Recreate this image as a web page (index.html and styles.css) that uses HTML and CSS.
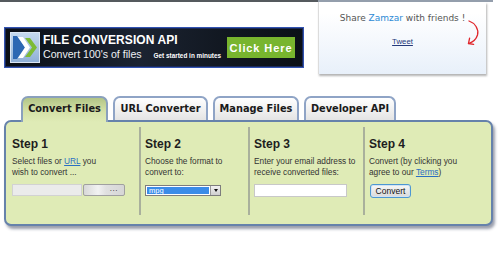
FILE: index.html
```html
<!DOCTYPE html>
<html lang="en">
<head>
<meta charset="utf-8">
<title>Zamzar - Convert Files</title>
<link rel="stylesheet" href="styles.css">
</head>
<body>
<header class="top">
  <div class="top-left">
    <div class="banner">
      <svg class="logo" viewBox="0 0 30 31" width="30" height="31">
        <defs>
          <linearGradient id="lg" x1="0" y1="0" x2="0" y2="1">
            <stop offset="0" stop-color="#c6daef"/>
            <stop offset="1" stop-color="#8eafd6"/>
          </linearGradient>
        </defs>
        <rect x="0.5" y="0.5" width="29" height="30" fill="url(#lg)" stroke="#dce7f4"/>
        <polygon points="3,4 7,4 15,15.5 7,27 3,27" fill="#2d68b3"/>
        <polygon points="8,5 13,5 20,15.5 13,26 8,26 15,15.5" fill="#ffffff"/>
        <polygon points="15,6 20,6 27,15.5 20,25 15,25 22,15.5" fill="#7dbb36"/>
      </svg>
      <div class="banner-text">
        <div class="b-title">FILE CONVERSION API</div>
        <div class="b-sub"><span>Convert 100's of files</span><span class="b-small">Get started in minutes</span></div>
      </div>
      <div class="b-btn">Click Here</div>
    </div>
  </div>
  <div class="top-right">
    <div class="share">
      <p class="share-text">Share <span class="zam">Zamzar</span> with friends !</p>
      <a class="tweet" href="#">Tweet</a>
      <svg class="arrow" width="14" height="30" viewBox="0 0 14 30">
        <path d="M3 3 C9 5 13 11 11.5 17 C10 22 6 24.5 2.5 25.5" fill="none" stroke="#e0262b" stroke-width="1.3" stroke-linecap="round"/>
        <path d="M2.5 25.5 L3.6 20.2 M2.5 25.5 L7.6 26.4" fill="none" stroke="#e0262b" stroke-width="1.3" stroke-linecap="round"/>
      </svg>
    </div>
  </div>
</header>

<nav class="tabs">
  <div class="tab t1 active">Convert Files</div>
  <div class="tab t2">URL Converter</div>
  <div class="tab t3">Manage Files</div>
  <div class="tab t4">Developer API</div>
</nav>

<section class="panel">
  <div class="col first">
    <h3 class="step">Step 1</h3>
    <p class="desc">Select files or <a href="#">URL</a> you<br>wish to convert ...</p>
    <div class="ctrl">
      <div class="file-field"></div>
      <div class="file-btn">...</div>
    </div>
  </div>
  <div class="col">
    <h3 class="step">Step 2</h3>
    <p class="desc">Choose the format to<br>convert to:</p>
    <div class="ctrl sel-wrap">
      <div class="sel">
        <div class="sel-val">mpg</div>
        <div class="sel-btn"><span class="tri"></span></div>
      </div>
    </div>
  </div>
  <div class="col">
    <h3 class="step">Step 3</h3>
    <p class="desc">Enter your email address to<br>receive converted files:</p>
    <div class="ctrl">
      <input class="email" type="text">
    </div>
  </div>
  <div class="col">
    <h3 class="step">Step 4</h3>
    <p class="desc">Convert (by clicking you<br>agree to our <a href="#">Terms</a>)</p>
    <div class="ctrl">
      <button class="convert" type="button">Convert</button>
    </div>
  </div>
</section>
</body>
</html>
```
FILE: styles.css
```css
* { box-sizing: border-box; }
html, body { margin: 0; padding: 0; background: #fff; }
body {
  width: 502px;
  height: 253px;
  overflow: hidden;
  font-family: "Liberation Sans", Arial, sans-serif;
  color: #333;
}

/* ---------- header ---------- */
.top { display: flex; align-items: flex-start; }
.top-left {
  width: 318px;
  border-top: 2px solid #555a5e;
  padding: 25px 0 0 4px;
}
.banner {
  display: flex;
  align-items: center;
  width: 300px;
  height: 41px;
  border: 1px solid #3253b2;
  box-shadow: inset 0 0 0 1px #1b2a58;
  background: linear-gradient(90deg, #0a0f16, #1b2331 45%, #111720 75%, #0b1017);
  padding: 0 8px 0 5px;
}
.logo { flex: none; display: block; }
.banner-text { margin-left: 3px; }
.b-title {
  font-weight: bold;
  font-size: 12px;
  line-height: 13px;
  color: #fff;
  letter-spacing: 0.1px;
}
.b-sub {
  display: flex;
  align-items: baseline;
  margin-top: 1px;
  font-size: 10.6px;
  line-height: 13px;
  color: #eef0f3;
}
.b-small {
  margin-left: 12px;
  font-size: 6.4px;
  font-weight: bold;
  color: #fff;
}
.b-btn {
  margin-left: auto;
  width: 68px;
  height: 21px;
  background: #78b52e;
  color: #fff;
  font-weight: bold;
  font-size: 11px;
  letter-spacing: 0.9px;
  display: flex;
  align-items: center;
  justify-content: center;
}

.top-right {
  width: 175px;
  border-top: 2px solid #949eac;
}
.share {
  position: relative;
  width: 168px;
  height: 72px;
  border-left: 1px solid #dcdcdc;
  background: linear-gradient(#ffffff 15%, #e8f0fa);
  box-shadow: 1px 2px 2px rgba(0, 0, 0, 0.3);
  text-align: center;
  padding-top: 11px;
}
.share-text {
  margin: 0;
  font-family: "DejaVu Sans", Verdana, sans-serif;
  font-size: 9px;
  line-height: 11px;
  color: #555;
}
.zam { color: #2d8ad5; }
.tweet {
  display: block;
  margin-top: 13.4px;
  font-size: 7.8px;
  line-height: 10px;
  color: #24397a;
  text-decoration: underline;
}
.arrow { position: absolute; left: 147px; top: 16px; }

/* ---------- tabs ---------- */
.tabs {
  display: flex;
  align-items: flex-start;
  gap: 5px;
  height: 24px;
  margin-top: 22px;
  padding-left: 21px;
  position: relative;
  z-index: 1;
}
.tab {
  height: 24px;
  border: 2px solid #8fa4c6;
  border-bottom: none;
  border-radius: 7px 7px 0 0;
  background: linear-gradient(#ffffff, #e4e4e4);
  font-family: "DejaVu Sans", Verdana, sans-serif;
  font-weight: bold;
  font-size: 9.8px;
  line-height: 12px;
  padding-top: 5px;
  text-align: center;
  color: #1a1a1a;
  white-space: nowrap;
}
.tab.active {
  height: 26px;
  border-color: #8aa0bd;
  background: linear-gradient(#b2c586, #d4e1a7 55%, #dfebb6);
}
.t1 { width: 87px; }
.t2 { width: 95px; }
.t3 { width: 86px; }
.t4 { width: 92px; }

/* ---------- panel ---------- */
.panel {
  margin-left: 4px;
  width: 489px;
  height: 106px;
  border: 2px solid #6682ab;
  border-radius: 7px;
  background: #dfebb6;
  box-shadow: 2px 3px 3px rgba(30, 40, 70, 0.45);
  display: grid;
  grid-template-columns: 133px 109px 115px 1fr;
  padding: 5px 0 9px 0;
}
.col {
  padding-left: 4px;
  border-left: 2px solid #a9b09c;
}
.col.first {
  padding-left: 6px;
  border-left: none;
}
.step {
  margin: 10px 0 0;
  font-size: 12px;
  line-height: 14px;
  font-weight: bold;
  color: #1e1e1e;
}
.desc {
  margin: 4.8px 0 0;
  font-size: 8.3px;
  line-height: 11px;
  color: #333;
  white-space: nowrap;
}
.desc a { color: #2b6fc2; text-decoration: underline; }
.ctrl { display: flex; margin-top: 6.2px; }

.file-field {
  width: 70px;
  height: 12px;
  background: #ebebeb;
  border: 1px solid #d2d2d2;
}
.file-btn {
  margin-left: 1px;
  width: 42px;
  height: 12px;
  border: 1px solid #a0a0a0;
  border-radius: 2px;
  background: linear-gradient(90deg, #d8d8d8, #f2f2f2 35%, #e0e0e0 55%, #d6d6d6);
  font-size: 8px;
  line-height: 7px;
  text-align: right;
  padding-right: 6px;
  color: #222;
  letter-spacing: 0.5px;
}

.sel-wrap { margin-top: 7.2px; }
.sel {
  display: flex;
  width: 76px;
  height: 11px;
  border: 1px solid #7d7d7d;
  background: #fff;
}
.sel-val {
  flex: 1;
  margin: 1px 1px 1px 1px;
  background: #3b8ce8;
  color: #fff;
  font-size: 7.5px;
  line-height: 7px;
  padding-left: 2px;
}
.sel-btn {
  width: 10px;
  border-left: 1px solid #9a9a9a;
  background: linear-gradient(#f2f2f2, #cfcfcf);
  display: flex;
  align-items: center;
  justify-content: center;
}
.tri {
  width: 0;
  height: 0;
  border-left: 2.5px solid transparent;
  border-right: 2.5px solid transparent;
  border-top: 3px solid #111;
}

.email {
  display: block;
  width: 93px;
  height: 13px;
  margin: 0;
  padding: 0;
  background: #fff;
  border: 1px solid #c8c8c8;
}

.convert {
  display: block;
  width: 41px;
  height: 14px;
  margin: 0 0 0 1px;
  padding: 0;
  border: 1px solid #4d97d3;
  border-radius: 3px;
  background: linear-gradient(#f8f8f8, #d9d9d9);
  box-shadow: inset 0 0 0 1px #d3e3f2;
  font-family: "Liberation Sans", Arial, sans-serif;
  font-size: 8.5px;
  line-height: 12px;
  color: #111;
  text-align: center;
}
```
